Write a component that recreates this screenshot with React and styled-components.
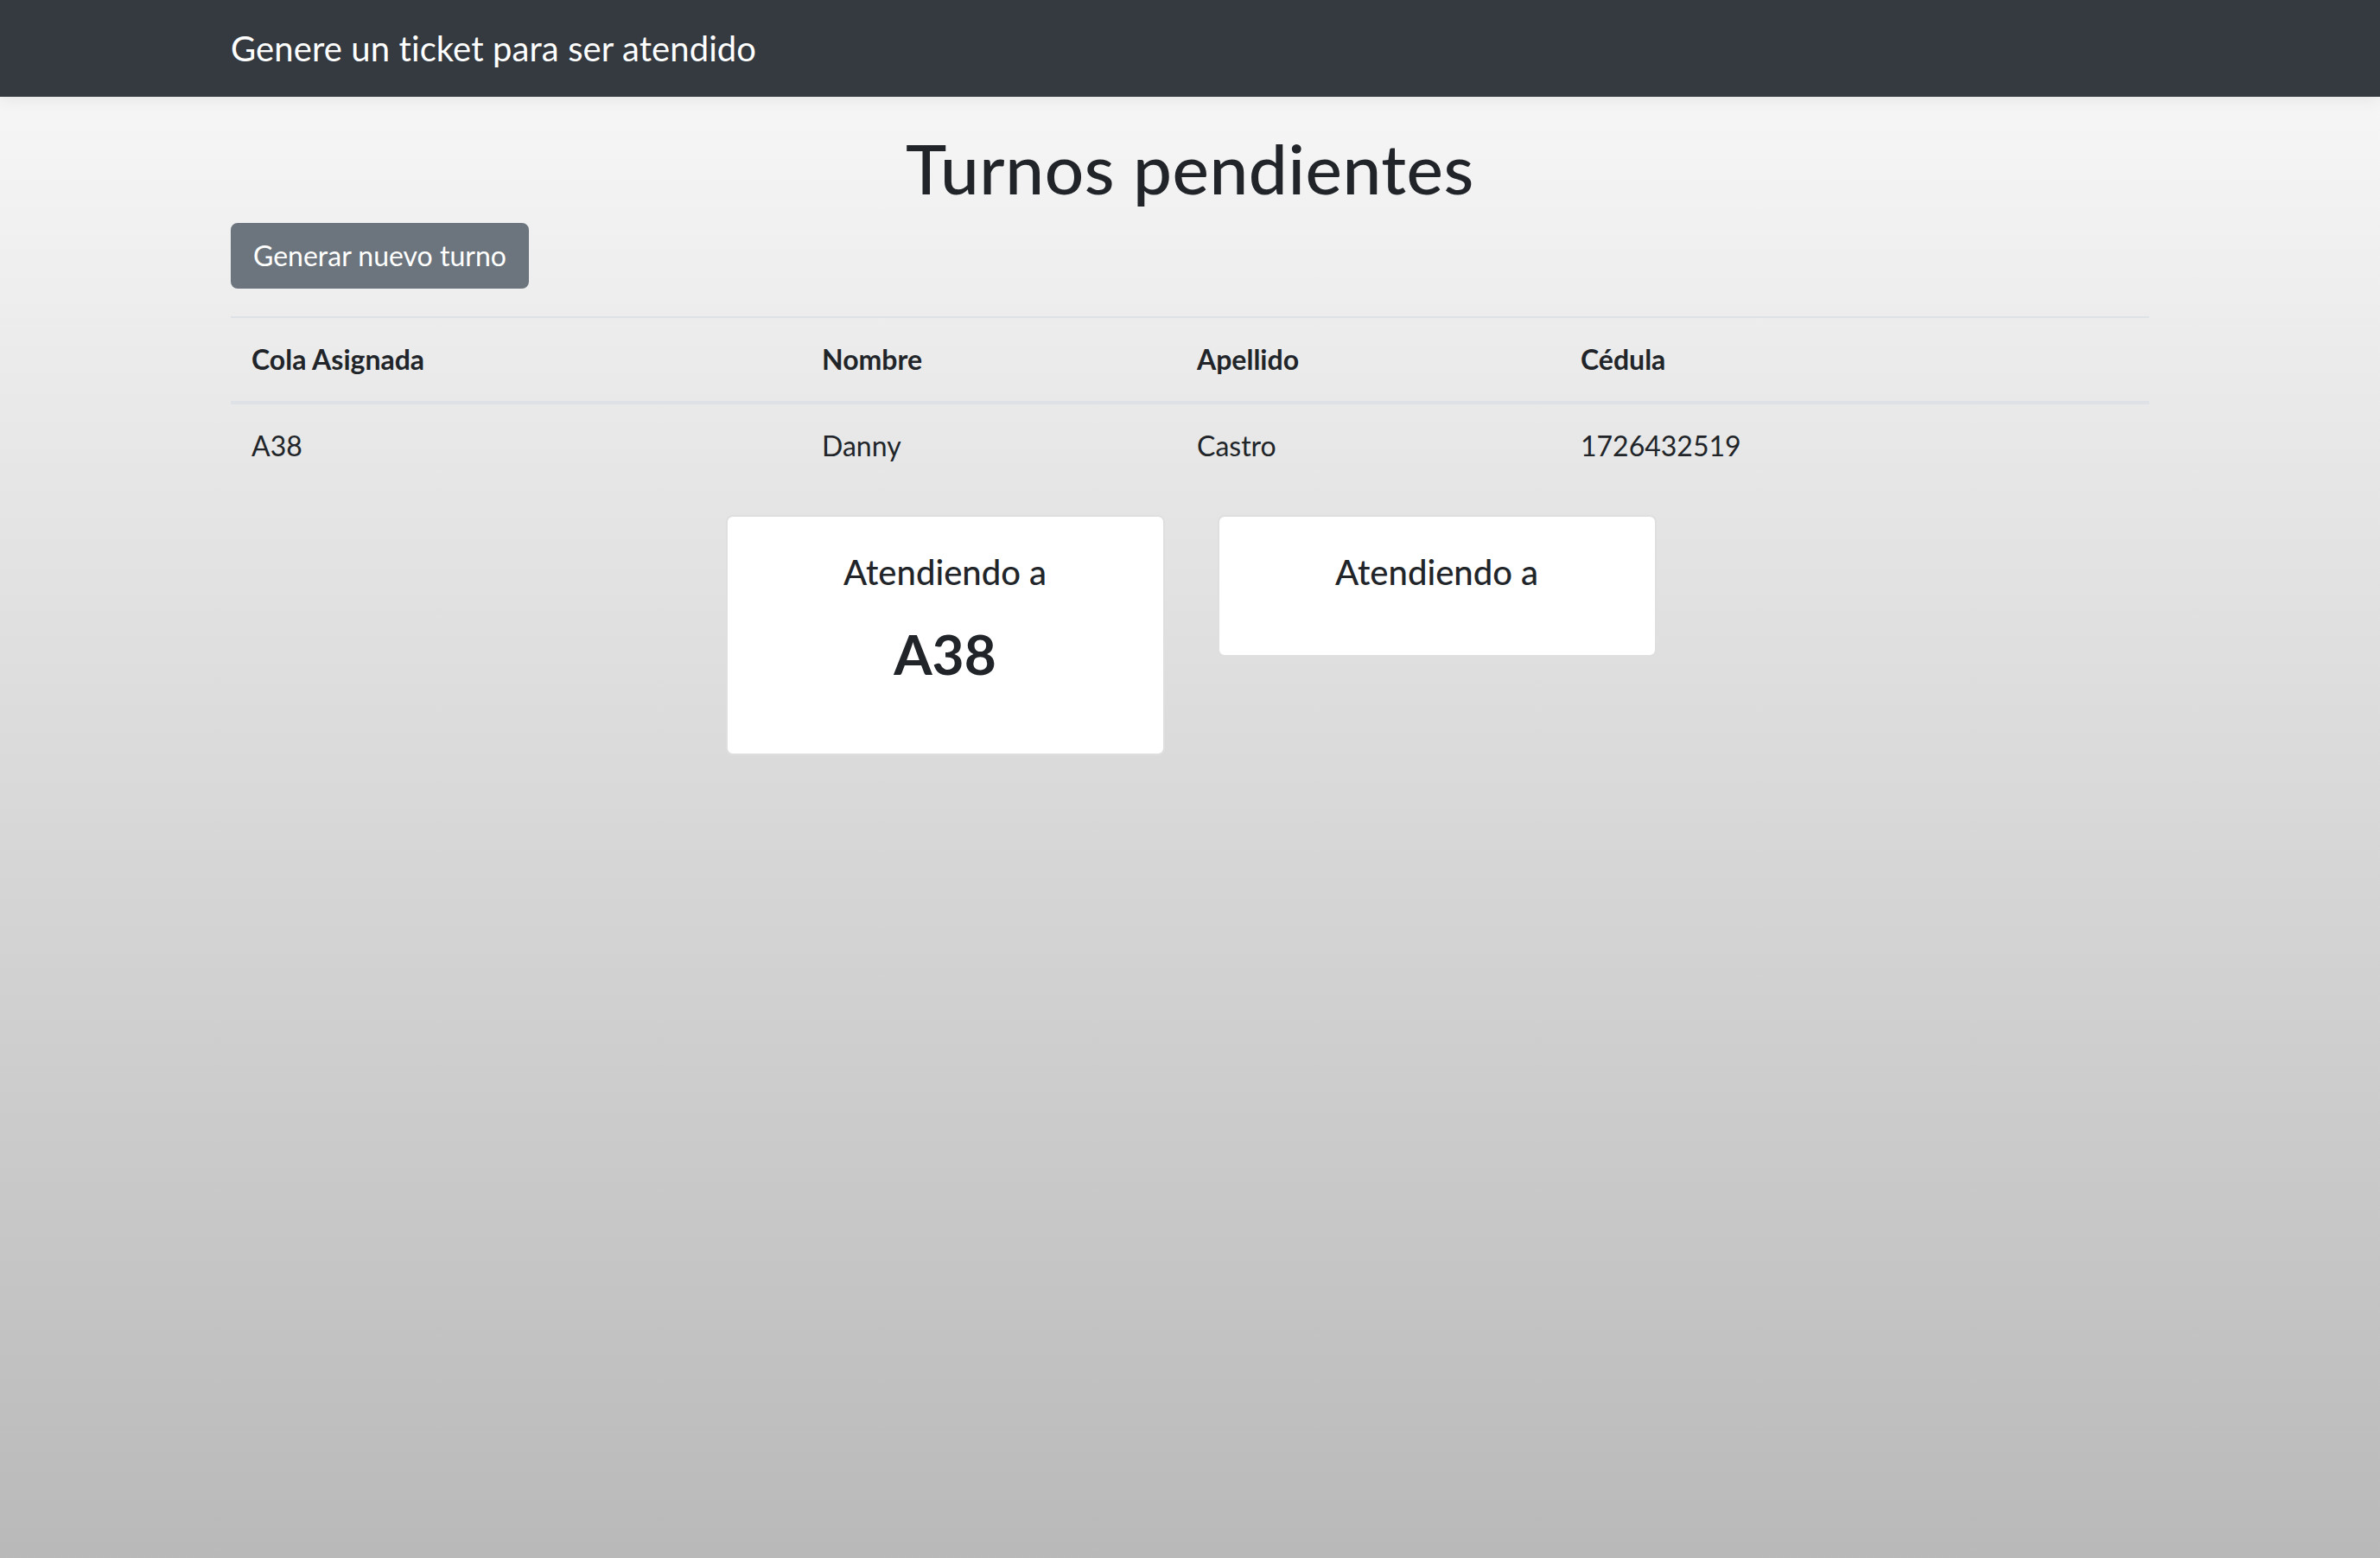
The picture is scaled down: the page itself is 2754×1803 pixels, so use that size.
import React from "react";
import styled, { createGlobalStyle } from "styled-components";

const GlobalStyle = createGlobalStyle`
  * { box-sizing: border-box; }
  html, body { margin: 0; padding: 0; }
  body {
    min-height: 1803px;
    font-family: "Lato", "Liberation Sans", sans-serif;
    color: #212529;
    background: linear-gradient(to bottom, #fafafa 0%, #b9b9b9 100%);
  }
`;

const turnos = [
  { cola: "A38", nombre: "Danny", apellido: "Castro", cedula: "1726432519" },
];

const App = () => {
  return (
    <>
      <GlobalStyle />
      <Navbar>
        <Container>
          <Brand>Genere un ticket para ser atendido</Brand>
        </Container>
      </Navbar>
      <Container>
        <Title>Turnos pendientes</Title>
        <Button>Generar nuevo turno</Button>
        <Table>
          <colgroup>
            <col style={{ width: 660 }} />
            <col style={{ width: 434 }} />
            <col style={{ width: 444 }} />
            <col />
          </colgroup>
          <thead>
            <tr>
              <Th>Cola Asignada</Th>
              <Th>Nombre</Th>
              <Th>Apellido</Th>
              <Th>Cédula</Th>
            </tr>
          </thead>
          <tbody>
            {turnos.map((t) => (
              <tr key={t.cola}>
                <Td>{t.cola}</Td>
                <Td>{t.nombre}</Td>
                <Td>{t.apellido}</Td>
                <Td>{t.cedula}</Td>
              </tr>
            ))}
          </tbody>
        </Table>
        <CardRow>
          <Card>
            <CardTitle>Atendiendo a</CardTitle>
            <Ticket>A38</Ticket>
          </Card>
          <Card>
            <CardTitle>Atendiendo a</CardTitle>
          </Card>
        </CardRow>
      </Container>
    </>
  );
};

const Navbar = styled.nav`
  background: #343a40;
  padding: 16px 0;
  box-shadow: 0 4px 18px rgba(0, 0, 0, 0.07);
`;

const Container = styled.div`
  max-width: 2280px;
  margin: 0 auto;
  padding: 0 30px;
`;

const Brand = styled.div`
  color: #fff;
  font-size: 40px;
  line-height: 60px;
  padding: 10px 0;
  letter-spacing: 0.1px;
`;

const Title = styled.h1`
  margin: 34px 0 16px;
  text-align: center;
  font-size: 80px;
  font-weight: 500;
  line-height: 96px;
  letter-spacing: 0.6px;
`;

const Button = styled.button`
  display: inline-block;
  font-family: inherit;
  font-size: 32px;
  line-height: 48px;
  padding: 12px 24px;
  color: #fff;
  background: #6c757d;
  border: 2px solid #6c757d;
  border-radius: 8px;
`;

const Table = styled.table`
  width: 100%;
  margin: 32px 0 32px;
  border-collapse: collapse;
  table-layout: fixed;
  font-size: 32px;
  line-height: 48px;
`;

const Th = styled.th`
  text-align: left;
  font-weight: 700;
  padding: 24px;
  border-top: 2px solid #dee2e6;
  border-bottom: 4px solid #dee2e6;
`;

const Td = styled.td`
  padding: 24px;
`;

const CardRow = styled.div`
  display: flex;
  justify-content: center;
  align-items: flex-start;
  gap: 61px;
  padding-left: 2px;
`;

const Card = styled.div`
  width: 508px;
  background: #fff;
  border: 2px solid rgba(0, 0, 0, 0.125);
  border-radius: 8px;
  padding: 40px;
  text-align: center;
`;

const CardTitle = styled.h5`
  margin: 0 0 32px;
  font-size: 40px;
  font-weight: 500;
  line-height: 48px;
`;

const Ticket = styled.h2`
  margin: 0 0 37px;
  font-size: 64px;
  font-weight: 700;
  line-height: 77px;
`;

export default App;
